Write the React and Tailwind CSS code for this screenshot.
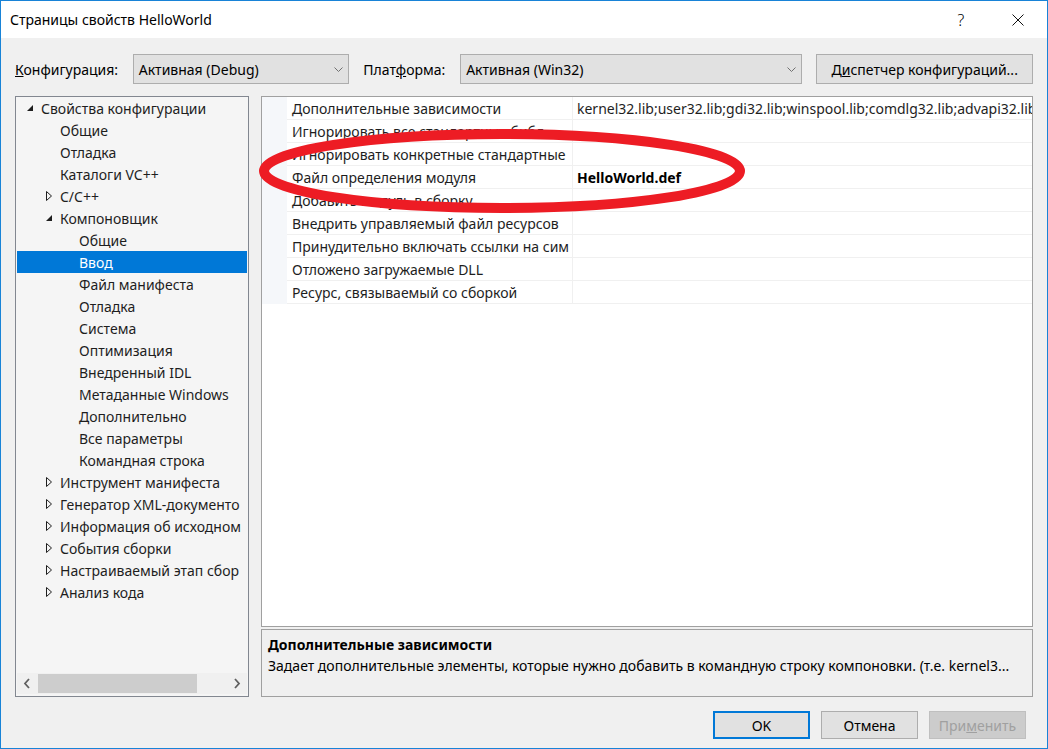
const FONT = { fontFamily: '"Noto Sans", "Open Sans", sans-serif' };

const tree = [
  { t: "Свойства конфигурации", lvl: 0, exp: "open" },
  { t: "Общие", lvl: 1 },
  { t: "Отладка", lvl: 1 },
  { t: "Каталоги VC++", lvl: 1 },
  { t: "C/C++", lvl: 1, exp: "closed" },
  { t: "Компоновщик", lvl: 1, exp: "open" },
  { t: "Общие", lvl: 2 },
  { t: "Ввод", lvl: 2, sel: true },
  { t: "Файл манифеста", lvl: 2 },
  { t: "Отладка", lvl: 2 },
  { t: "Система", lvl: 2 },
  { t: "Оптимизация", lvl: 2 },
  { t: "Внедренный IDL", lvl: 2 },
  { t: "Метаданные Windows", lvl: 2 },
  { t: "Дополнительно", lvl: 2 },
  { t: "Все параметры", lvl: 2 },
  { t: "Командная строка", lvl: 2 },
  { t: "Инструмент манифеста", lvl: 1, exp: "closed" },
  { t: "Генератор XML-документо", lvl: 1, exp: "closed" },
  { t: "Информация об исходном", lvl: 1, exp: "closed" },
  { t: "События сборки", lvl: 1, exp: "closed" },
  { t: "Настраиваемый этап сбор", lvl: 1, exp: "closed" },
  { t: "Анализ кода", lvl: 1, exp: "closed" },
];

const props = [
  ["Дополнительные зависимости", "kernel32.lib;user32.lib;gdi32.lib;winspool.lib;comdlg32.lib;advapi32.lib"],
  ["Игнорировать все стандартные библ", ""],
  ["Игнорировать конкретные стандартные", ""],
  ["Файл определения модуля", "HelloWorld.def", true],
  ["Добавить модуль в сборку", ""],
  ["Внедрить управляемый файл ресурсов", ""],
  ["Принудительно включать ссылки на сим", ""],
  ["Отложено загружаемые DLL", ""],
  ["Ресурс, связываемый со сборкой", ""],
];

const indent = { 0: "pl-[5px]", 1: "pl-[24px]", 2: "pl-[62px]" };

function Chevron() {
  return (
    <svg width="9" height="5" viewBox="0 0 9 5" className="shrink-0">
      <path d="M0.5 0.5 L4.5 4.5 L8.5 0.5" fill="none" stroke="#707070" strokeWidth="1" />
    </svg>
  );
}

function Expander({ kind, sel }) {
  if (kind === "open")
    return (
      <svg width="19" height="10" viewBox="0 0 19 10" className="shrink-0">
        <path d="M5 8 L11 8 L11 2 Z" fill={sel ? "#fff" : "#1e1e1e"} />
      </svg>
    );
  if (kind === "closed")
    return (
      <svg width="19" height="10" viewBox="0 0 19 10" className="shrink-0">
        <path d="M5.5 0.5 L10.5 5 L5.5 9.5 Z" fill="none" stroke="#1e1e1e" strokeWidth="1" />
      </svg>
    );
  return null;
}

function Combo({ w, text }) {
  return (
    <div className={`${w} h-[30px] bg-[#e1e1e1] border border-[#adadad] flex items-center pl-[5px] pr-[5px]`}>
      <span className="flex-1 text-[14px] text-black">{text}</span>
      <Chevron />
    </div>
  );
}

export default function App() {
  return (
    <div
      className="w-[1048px] h-[749px] border border-[#1883d7] bg-[#f0f0f0] flex flex-col relative overflow-hidden text-[#000]"
      style={FONT}
    >
      {/* title bar */}
      <div className="h-[37px] bg-white flex items-center shrink-0">
        <span className="pl-[9px] text-[14px] flex-1">Страницы свойств HelloWorld</span>
        <span className="w-[20px] text-center text-[16px] font-light mr-[41px]">?</span>
        <svg width="12" height="12" viewBox="0 0 12 12" className="mr-[23px]">
          <path d="M0.5 0.5 L11.5 11.5 M11.5 0.5 L0.5 11.5" stroke="#111" strokeWidth="1" />
        </svg>
      </div>

      <div className="flex-1 flex flex-col px-[14px] pt-[16px]">
        {/* config row */}
        <div className="flex items-center h-[30px] text-[14px]">
          <span className="w-[118px]">
            <u>К</u>онфигурация:
          </span>
          <Combo w="w-[217px]" text="Активная (Debug)" />
          <span className="ml-[14px] w-[97px]">
            Плат<u>ф</u>орма:
          </span>
          <Combo w="w-[343px]" text="Активная (Win32)" />
          <div className="ml-[14px] w-[217px] h-[30px] bg-[#e1e1e1] border border-[#adadad] flex items-center justify-center">
            Д<u>и</u>спетчер конфигураций...
          </div>
        </div>

        {/* main area */}
        <div className="flex gap-[12px] mt-[12px] h-[601px]">
          {/* tree */}
          <div className="w-[234px] shrink-0 border border-[#828790] bg-[#f5f5f5] flex flex-col p-[1px] pt-0 text-[14px]">
            <div className="flex-1 overflow-hidden">
              {tree.map((n, i) => (
                <div
                  key={i}
                  className={`h-[22px] flex items-center whitespace-nowrap overflow-hidden ${indent[n.lvl]} ${
                    n.sel ? "bg-[#0078d7] text-white" : "text-[#1e1e1e]"
                  }`}
                >
                  {n.lvl < 2 && <Expander kind={n.exp} sel={n.sel} />}
                  {n.lvl < 2 && !n.exp && <span className="w-[19px] shrink-0" />}
                  <span>{n.t}</span>
                </div>
              ))}
            </div>
            <div className="h-[21px] bg-[#f0f0f0] flex items-center shrink-0 mb-[1px]">
              <svg width="21" height="19" viewBox="0 0 21 19" className="shrink-0">
                <path d="M12 5 L8 9.5 L12 14" fill="none" stroke="#606060" strokeWidth="1.8" />
              </svg>
              <div className="w-[159px] h-[19px] bg-[#cdcdcd]" />
              <div className="flex-1" />
              <svg width="21" height="19" viewBox="0 0 21 19" className="shrink-0">
                <path d="M9 5 L13 9.5 L9 14" fill="none" stroke="#606060" strokeWidth="1.8" />
              </svg>
            </div>
          </div>

          {/* right column */}
          <div className="flex-1 min-w-0 flex flex-col gap-[2px]">
            <div className="h-[531px] border border-[#a0a0a0] bg-white text-[14px]">
              {props.map(([name, val, bold], i) => (
                <div key={i} className="flex h-[23px]">
                  <div className="w-[25px] bg-[#f5f7fa] shrink-0" />
                  <div className="w-[286px] shrink-0 border-b border-r border-[#f0f0f0] pl-[5px] flex items-center overflow-hidden whitespace-nowrap text-[#1e1e1e]">
                    {name}
                  </div>
                  <div
                    className={`flex-1 min-w-0 border-b border-[#f0f0f0] pl-[4px] flex items-center overflow-hidden whitespace-nowrap ${
                      bold ? "font-bold text-black" : "text-[#1e1e1e]"
                    }`}
                  >
                    {val}
                  </div>
                </div>
              ))}
            </div>
            <div className="flex-1 border border-[#a0a0a0] bg-[#f0f0f0] px-[6px] pt-[4px] text-[14px] leading-[21px] overflow-hidden">
              <div className="font-bold">Дополнительные зависимости</div>
              <div className="whitespace-nowrap">
                Задает дополнительные элементы, которые нужно добавить в командную строку компоновки. (т.е. kernel3...
              </div>
            </div>
          </div>
        </div>

        {/* buttons */}
        <div className="flex justify-end gap-[11px] mt-[14px] text-[14px]">
          <div className="w-[97px] h-[28px] bg-[#e1e1e1] border-2 border-[#0078d7] flex items-center justify-center">
            OK
          </div>
          <div className="w-[97px] h-[28px] bg-[#e1e1e1] border border-[#adadad] flex items-center justify-center">
            Отмена
          </div>
          <div className="w-[97px] h-[28px] bg-[#cccccc] border border-[#bfbfbf] text-[#a0a0a0] flex items-center justify-center mr-[7px]">
            При<u>м</u>енить
          </div>
        </div>
      </div>

      {/* red annotation */}
      <svg className="absolute left-0 top-0 pointer-events-none" width="1048" height="749">
        <ellipse cx="501" cy="170" rx="238" ry="37" fill="none" stroke="#ed1c24" strokeWidth="10" />
      </svg>
    </div>
  );
}
